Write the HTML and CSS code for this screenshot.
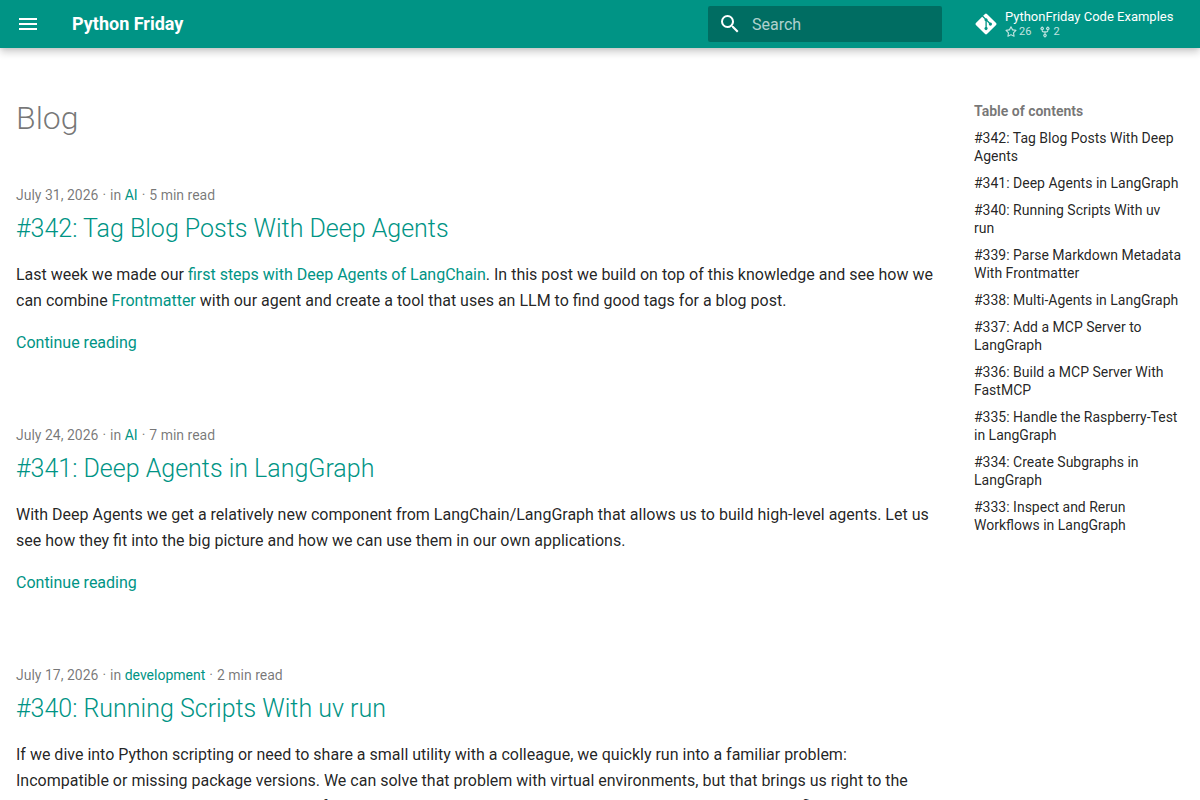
FILE: index.html
```html
<!DOCTYPE html>
<html lang="en">
  <head>
    <meta charset="UTF-8" />
    <meta name="viewport" content="width=device-width, initial-scale=1.0" />
    <title>Blog - Python Friday</title>
    <link rel="stylesheet" href="styles.css">
  </head>
  <body>
    <header class="header">
      <button class="menu-button" type="button" aria-label="Open navigation">
        <svg viewBox="0 0 24 24"><path d="M3 6h18v2H3V6m0 5h18v2H3v-2m0 5h18v2H3v-2Z" /></svg>
      </button>
      <a class="site-title" href="#">Python Friday</a>
      <form class="search" role="search">
        <label for="search-input" aria-label="Search">
          <svg viewBox="0 0 24 24"><path d="M9.5 3A6.5 6.5 0 0 1 16 9.5c0 1.61-.59 3.09-1.56 4.23l.27.27h.79l5 5-1.5 1.5-5-5v-.79l-.27-.27A6.516 6.516 0 0 1 9.5 16 6.5 6.5 0 0 1 3 9.5 6.5 6.5 0 0 1 9.5 3m0 2C7 5 5 7 5 9.5S7 14 9.5 14 14 12 14 9.5 12 5 9.5 5Z" /></svg>
        </label>
        <input id="search-input" type="text" placeholder="Search" autocomplete="off" />
      </form>
      <a class="source" href="#">
        <svg class="source-logo" viewBox="0 0 448 512"><path d="M439.55 236.05 244 40.45a28.87 28.87 0 0 0-40.81 0l-40.66 40.63 51.52 51.52c27.06-9.14 52.68 16.77 43.39 43.68l49.66 49.66c34.23-11.8 61.18 31 35.47 56.69-26.49 26.49-70.21-2.87-56-37.34L240.22 199v121.85c25.3 12.54 22.26 41.85 9.08 55a34.34 34.34 0 0 1-48.55 0c-17.57-17.6-11.07-46.91 11.25-56v-123c-20.8-8.51-24.6-30.74-18.64-45L142.57 101 8.45 235.14a28.86 28.86 0 0 0 0 40.81l195.61 195.6a28.86 28.86 0 0 0 40.8 0l194.69-194.69a28.86 28.86 0 0 0 0-40.81z" /></svg>
        <span class="source-text">
          <span class="source-name">PythonFriday Code Examples</span>
          <span class="source-facts">
            <span class="fact">
              <svg viewBox="0 0 16 16"><path d="M8 .25a.75.75 0 0 1 .673.418l1.882 3.815 4.21.612a.75.75 0 0 1 .416 1.279l-3.046 2.97.719 4.192a.751.751 0 0 1-1.088.791L8 12.347l-3.766 1.98a.75.75 0 0 1-1.088-.79l.72-4.194L.818 6.374a.75.75 0 0 1 .416-1.28l4.21-.611L7.327.668A.75.75 0 0 1 8 .25Zm0 2.445L6.615 5.5a.75.75 0 0 1-.564.41l-3.097.45 2.24 2.184a.75.75 0 0 1 .216.664l-.528 3.084 2.769-1.456a.75.75 0 0 1 .698 0l2.77 1.456-.53-3.084a.75.75 0 0 1 .216-.664l2.24-2.183-3.096-.45a.75.75 0 0 1-.564-.41L8 2.694Z" /></svg>
              26
            </span>
            <span class="fact">
              <svg viewBox="0 0 16 16"><path d="M5 5.372v.878c0 .414.336.75.75.75h4.5a.75.75 0 0 0 .75-.75v-.878a2.25 2.25 0 1 1 1.5 0v.878a2.25 2.25 0 0 1-2.25 2.25h-1.5v2.128a2.251 2.251 0 1 1-1.5 0V8.5h-1.5A2.25 2.25 0 0 1 3.5 6.25v-.878a2.25 2.25 0 1 1 1.5 0ZM5 3.25a.75.75 0 1 0-1.5 0 .75.75 0 0 0 1.5 0Zm6.75.75a.75.75 0 1 0 0-1.5.75.75 0 0 0 0 1.5Zm-3 8.75a.75.75 0 1 0-1.5 0 .75.75 0 0 0 1.5 0Z" /></svg>
              2
            </span>
          </span>
        </span>
      </a>
    </header>

    <div class="container">
      <main class="content">
        <h1>Blog</h1>

        <article class="post">
          <ul class="meta">
            <li>July 31, 2026</li>
            <li>in <a href="#">AI</a></li>
            <li>5 min read</li>
          </ul>
          <h2 id="post-342"><a href="#">#342: Tag Blog Posts With Deep Agents</a></h2>
          <p>
            Last week we made our <a href="#">first steps with Deep Agents of LangChain</a>.
            In this post we build on top of this knowledge and see how we can combine
            <a href="#">Frontmatter</a> with our agent and create a tool that uses an LLM
            to find good tags for a blog post.
          </p>
          <p><a href="#">Continue reading</a></p>
        </article>

        <article class="post">
          <ul class="meta">
            <li>July 24, 2026</li>
            <li>in <a href="#">AI</a></li>
            <li>7 min read</li>
          </ul>
          <h2 id="post-341"><a href="#">#341: Deep Agents in LangGraph</a></h2>
          <p>
            With Deep Agents we get a relatively new component from LangChain/LangGraph
            that allows us to build high-level agents. Let us see how they fit into the
            big picture and how we can use them in our own applications.
          </p>
          <p><a href="#">Continue reading</a></p>
        </article>

        <article class="post">
          <ul class="meta">
            <li>July 17, 2026</li>
            <li>in <a href="#">development</a></li>
            <li>2 min read</li>
          </ul>
          <h2 id="post-340"><a href="#">#340: Running Scripts With uv run</a></h2>
          <p>
            If we dive into Python scripting or need to share a small utility with a
            colleague, we quickly run into a familiar problem: Incompatible or missing
            package versions. We can solve that problem with virtual environments, but
            that brings us right to the next one: Managing multiple environments for
            small scripts and more tools than we need slows down our workflow.
          </p>
          <p><a href="#">Continue reading</a></p>
        </article>
      </main>

      <nav class="toc" aria-labelledby="toc-title">
        <div class="toc-title" id="toc-title">Table of contents</div>
        <ul>
          <li><a href="#post-342">#342: Tag Blog Posts With Deep Agents</a></li>
          <li><a href="#post-341">#341: Deep Agents in LangGraph</a></li>
          <li><a href="#post-340">#340: Running Scripts With uv run</a></li>
          <li><a href="#">#339: Parse Markdown Metadata With Frontmatter</a></li>
          <li><a href="#">#338: Multi-Agents in LangGraph</a></li>
          <li><a href="#">#337: Add a MCP Server to LangGraph</a></li>
          <li><a href="#">#336: Build a MCP Server With FastMCP</a></li>
          <li><a href="#">#335: Handle the Raspberry-Test in LangGraph</a></li>
          <li><a href="#">#334: Create Subgraphs in LangGraph</a></li>
          <li><a href="#">#333: Inspect and Rerun Workflows in LangGraph</a></li>
        </ul>
      </nav>
    </div>
  </body>
</html>
```
FILE: styles.css
```css
* {
  box-sizing: border-box;
}
html {
  scrollbar-width: none;
}
body {
  margin: 0;
  font-family: Roboto, "Liberation Sans", sans-serif;
  font-size: 16px;
  line-height: 26px;
  color: rgba(0, 0, 0, 0.87);
  background: #fff;
}
a {
  color: #009485;
  text-decoration: none;
}
svg {
  display: block;
  fill: currentColor;
}

/* header */
.header {
  position: sticky;
  top: 0;
  z-index: 4;
  display: flex;
  align-items: center;
  height: 48px;
  padding: 0 8px;
  color: #fff;
  background: #009485;
  box-shadow: 0 0 4px rgba(0, 0, 0, 0.1), 0 4px 8px rgba(0, 0, 0, 0.2);
}
.menu-button {
  padding: 8px;
  border: none;
  color: inherit;
  background: none;
  cursor: pointer;
}
.menu-button svg,
.search svg {
  width: 24px;
  height: 24px;
}
.site-title {
  flex: 1;
  margin-left: 24px;
  font-size: 18px;
  font-weight: 700;
  color: inherit;
}
.search {
  display: flex;
  align-items: center;
  width: 234px;
  height: 36px;
  border-radius: 2px;
  background: rgba(0, 0, 0, 0.26);
}
.search label {
  padding: 0 10px;
}
.search input {
  flex: 1;
  min-width: 0;
  height: 36px;
  padding: 0;
  border: none;
  outline: none;
  font: inherit;
  color: inherit;
  background: none;
}
.search input::placeholder {
  color: rgba(255, 255, 255, 0.7);
}
.source {
  display: flex;
  align-items: center;
  gap: 7px;
  width: 226px;
  margin-left: 24px;
  padding-left: 8px;
  color: inherit;
}
.source-logo {
  width: 24px;
  height: 24px;
}
.source-text {
  display: flex;
  flex-direction: column;
  font-size: 13px;
  line-height: 16px;
  white-space: nowrap;
}
.source-facts {
  display: flex;
  gap: 8px;
  font-size: 11px;
  line-height: 14px;
  opacity: 0.75;
}
.fact {
  display: flex;
  align-items: center;
  gap: 2px;
}
.fact svg {
  width: 12px;
  height: 12px;
}

/* page */
.container {
  display: flex;
  align-items: flex-start;
  padding-top: 50px;
}
.content {
  flex: 1;
  min-width: 0;
  padding: 0 24px 24px 16px;
}
h1 {
  margin: 0 0 46px;
  font-size: 32px;
  font-weight: 300;
  line-height: 40px;
  color: rgba(0, 0, 0, 0.54);
}
.post {
  margin-bottom: 68px;
}
.meta {
  display: flex;
  margin: 0;
  padding: 0;
  list-style: none;
  font-size: 14px;
  line-height: 22px;
  color: rgba(0, 0, 0, 0.54);
}
.meta li + li::before {
  content: "·";
  margin: 0 4px;
}
h2 {
  margin: 5px 0 15px;
  font-size: 25px;
  font-weight: 300;
  line-height: 36px;
}
p {
  margin: 0 0 16px;
}

/* table of contents */
.toc {
  width: 242px;
  padding: 4px 16px;
  font-size: 14px;
  line-height: 18px;
}
.toc-title {
  font-weight: 700;
  color: rgba(0, 0, 0, 0.54);
}
.toc ul {
  margin: 0;
  padding: 0;
  list-style: none;
}
.toc li {
  margin-top: 9px;
}
.toc a {
  color: rgba(0, 0, 0, 0.87);
}
```
